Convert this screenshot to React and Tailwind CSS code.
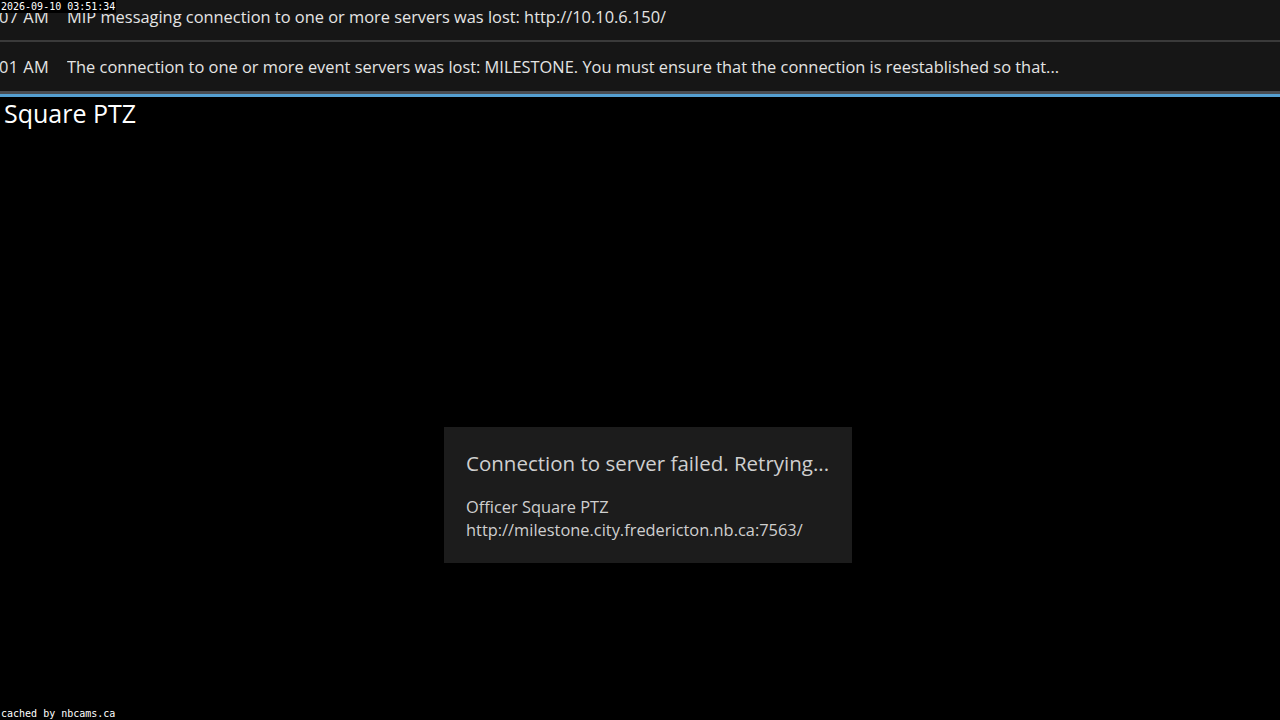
import React from 'react';

const events = [
  {
    time: '07 AM',
    text: 'MIP messaging connection to one or more servers was lost: http://10.10.6.150/',
    h: 'h-[40px] pb-[6px]',
  },
  {
    time: '01 AM',
    text: 'The connection to one or more event servers was lost: MILESTONE. You must ensure that the connection is reestablished so that...',
    h: 'h-[49px] pt-[1px]',
  },
];

function EventRow({ time, text, h }) {
  return (
    <div className={`flex items-center bg-[#161616] ${h}`}>
      <span className="w-[69px] shrink-0 -ml-[2px] pl-[1px] tracking-[0.4px]">{time}</span>
      <span className="truncate">{text}</span>
    </div>
  );
}

export default function App() {
  return (
    <div className="relative w-[1280px] h-[720px] overflow-hidden bg-black text-[#e4e4e4] font-['Open_Sans',sans-serif]">
      <div className="text-[16.4px]">
        <EventRow {...events[0]} />
        <div className="h-[2px] bg-[#3a3a3a]" />
        <EventRow {...events[1]} />
        <div className="h-[3px] bg-[#4a4d52]" />
        <div className="h-[3px] bg-[#55a0d2]" />
      </div>

      <div className="pl-[4px] pt-[1px] text-[25px] leading-[30px] text-white">Square PTZ</div>

      <div className="pl-[444px] pt-[299px]">
        <div className="w-[408px] h-[136px] bg-[#1c1c1c] px-[22px] pt-[22px] text-[#cfcfcf]">
          <div className="text-[20.5px] leading-[28px]">Connection to server failed. Retrying...</div>
          <div className="mt-[18px] text-[16.4px] leading-[23px]">
            <div>Officer Square PTZ</div>
            <div>http://milestone.city.fredericton.nb.ca:7563/</div>
          </div>
        </div>
      </div>

      <div className="absolute top-0 left-0 bg-black text-white px-[1px] text-[10px] leading-[13px] font-['DejaVu_Sans_Mono',monospace]">
        2026-09-10 03:51:34
      </div>
      <div className="absolute bottom-0 left-0 text-white px-[1px] text-[10px] leading-[13px] font-['DejaVu_Sans_Mono',monospace]">
        cached by nbcams.ca
      </div>
    </div>
  );
}
